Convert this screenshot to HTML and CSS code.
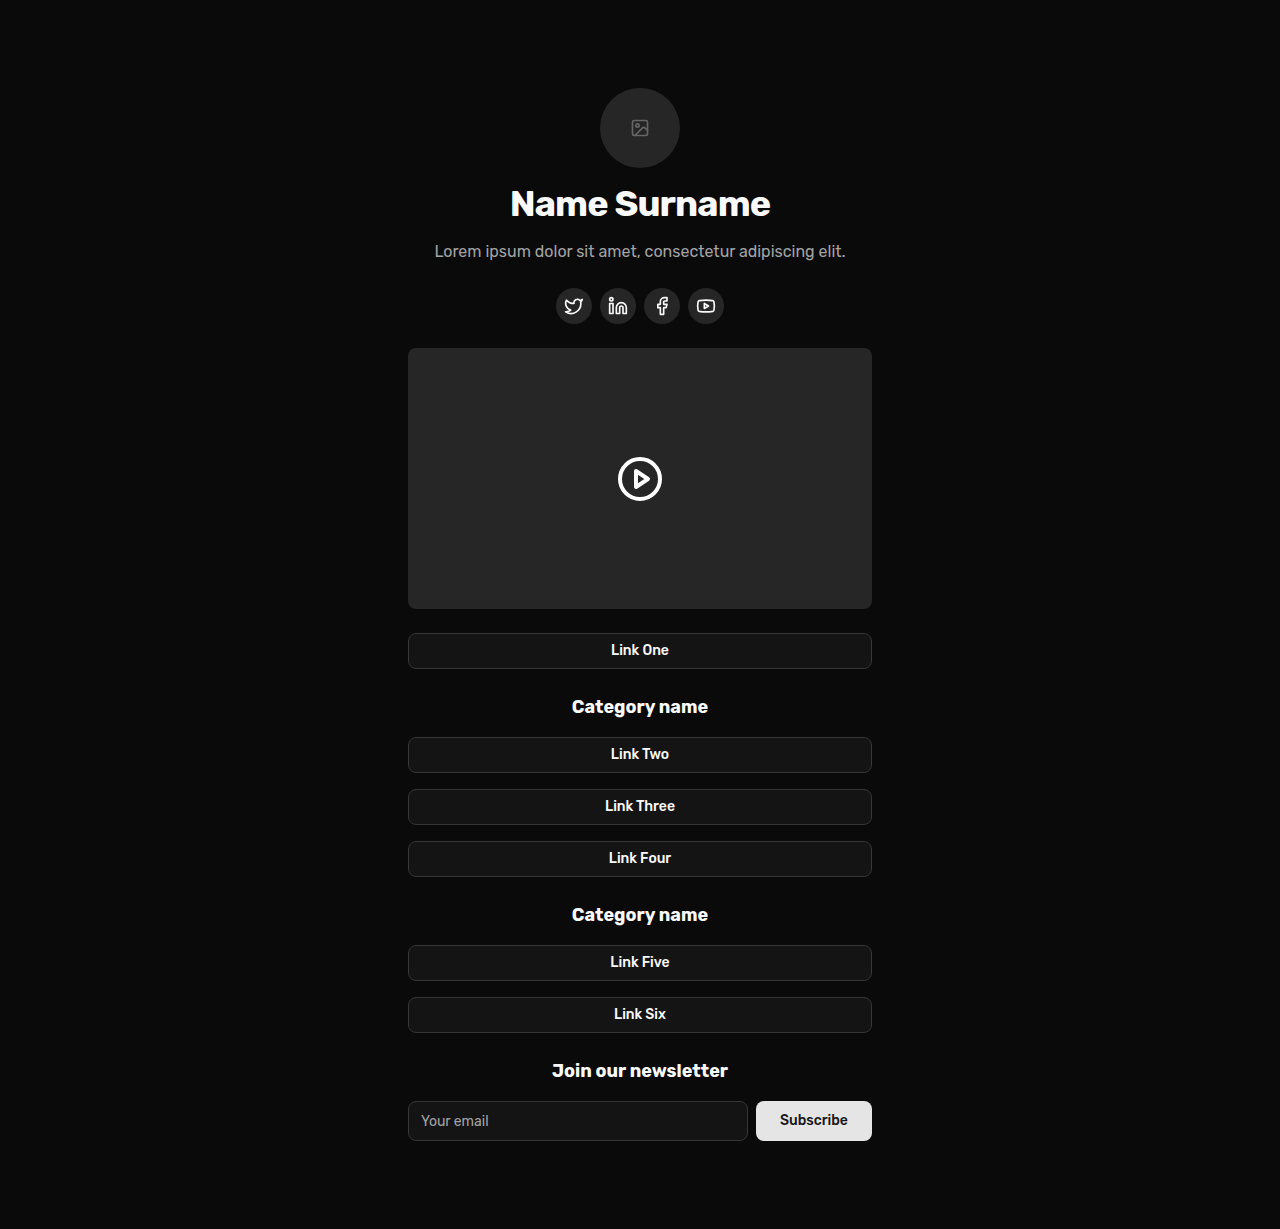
FILE: index.html
```html
<!DOCTYPE html>
<html lang="en">
<head>
<meta charset="utf-8">
<title>Name Surname</title>
<link rel="stylesheet" href="styles.css">
</head>
<body>
<main class="page">
  <header class="profile">
    <div class="avatar">
      <svg class="icon" viewBox="0 0 24 24"><rect x="3" y="3" width="18" height="18" rx="2"/><circle cx="9" cy="9" r="2"/><path d="m21 15-3.086-3.086a2 2 0 0 0-2.828 0L6 21"/></svg>
    </div>
    <h1 class="name">Name Surname</h1>
    <p class="bio">Lorem ipsum dolor sit amet, consectetur adipiscing elit.</p>
  </header>
  <nav class="socials">
    <a class="social" aria-label="Twitter"><svg class="icon" viewBox="0 0 24 24"><path d="M22 4s-.7 2.1-2 3.4c1.6 10-9.4 17.3-18 11.6 2.2.1 4.4-.6 6-2C3 15.5.5 9.6 3 5c2.2 2.6 5.6 4.1 9 4-.9-4.2 4-6.6 7-3.8 1.1 0 3-1.2 3-1.2z"/></svg></a>
    <a class="social" aria-label="LinkedIn"><svg class="icon" viewBox="0 0 24 24"><path d="M16 8a6 6 0 0 1 6 6v7h-4v-7a2 2 0 0 0-4 0v7h-4v-7a6 6 0 0 1 6-6z"/><rect x="2" y="9" width="4" height="12"/><circle cx="4" cy="4" r="2"/></svg></a>
    <a class="social" aria-label="Facebook"><svg class="icon" viewBox="0 0 24 24"><path d="M18 2h-3a5 5 0 0 0-5 5v3H7v4h3v8h4v-8h3l1-4h-4V7a1 1 0 0 1 1-1h3z"/></svg></a>
    <a class="social" aria-label="YouTube"><svg class="icon" viewBox="0 0 24 24"><path d="M2.5 17a24.12 24.12 0 0 1 0-10 2 2 0 0 1 1.4-1.4 49.56 49.56 0 0 1 16.2 0A2 2 0 0 1 21.5 7a24.12 24.12 0 0 1 0 10 2 2 0 0 1-1.4 1.4 49.55 49.55 0 0 1-16.2 0A2 2 0 0 1 2.5 17"/><path d="m10 15 5-3-5-3z"/></svg></a>
  </nav>
  <div class="video">
    <svg class="icon play" viewBox="0 0 24 24"><circle cx="12" cy="12" r="10"/><path d="m10 8 6 4-6 4z"/></svg>
  </div>
  <section class="links">
    <a class="link">Link One</a>
  </section>
  <section class="links">
    <h2 class="heading">Category name</h2>
    <a class="link">Link Two</a>
    <a class="link">Link Three</a>
    <a class="link">Link Four</a>
  </section>
  <section class="links">
    <h2 class="heading">Category name</h2>
    <a class="link">Link Five</a>
    <a class="link">Link Six</a>
  </section>
  <section class="links">
    <h2 class="heading">Join our newsletter</h2>
    <form class="signup">
      <input class="email" type="email" placeholder="Your email">
      <button class="subscribe" type="button">Subscribe</button>
    </form>
  </section>
</main>
</body>
</html>
```
FILE: styles.css
```css
* { box-sizing: border-box; margin: 0; }
body {
  background: #0a0a0a;
  color: #fafafa;
  font-family: Rubik, Roboto, sans-serif;
}
.page {
  width: 464px;
  min-height: 1229px;
  margin: 0 auto;
  padding: 88px 0;
  display: flex;
  flex-direction: column;
  gap: 24px;
}
.icon {
  width: 20px;
  height: 20px;
  fill: none;
  stroke: currentColor;
  stroke-width: 2;
  stroke-linecap: round;
  stroke-linejoin: round;
}
.profile { display: flex; flex-direction: column; align-items: center; }
.avatar {
  width: 80px;
  height: 80px;
  border-radius: 50%;
  background: #262626;
  color: #656565;
  display: grid;
  place-items: center;
}
.name {
  margin-top: 16px;
  font-size: 36px;
  line-height: 40px;
  font-weight: 700;
  letter-spacing: -0.025em;
  white-space: nowrap;
}
.bio {
  margin-top: 16px;
  font-size: 16px;
  line-height: 24px;
  color: #a3a3a3;
  white-space: nowrap;
}
.socials { display: flex; justify-content: center; gap: 8px; }
.social {
  width: 36px;
  height: 36px;
  border-radius: 50%;
  background: #262626;
  display: grid;
  place-items: center;
}
.video {
  height: 261px;
  border-radius: 8px;
  background: #262626;
  display: grid;
  place-items: center;
}
.play { width: 48px; height: 48px; color: #fff; }
.links { display: flex; flex-direction: column; gap: 16px; }
.heading {
  font-size: 18px;
  line-height: 28px;
  font-weight: 700;
  text-align: center;
}
.link {
  height: 36px;
  border: 1px solid #363636;
  border-radius: 8px;
  background: #141414;
  font-size: 14px;
  line-height: 34px;
  font-weight: 500;
  text-align: center;
}
.signup { display: flex; gap: 8px; }
.email {
  flex: 1;
  min-width: 0;
  height: 40px;
  padding: 0 12px;
  border: 1px solid #363636;
  border-radius: 8px;
  background: #141414;
  color: #fafafa;
  font: 400 14px/20px Rubik, Roboto, sans-serif;
}
.email::placeholder { color: #a3a3a3; }
.subscribe {
  width: 116px;
  height: 40px;
  padding: 0;
  border: 0;
  border-radius: 8px;
  background: #e5e5e5;
  color: #171717;
  font: 500 14px/20px Rubik, Roboto, sans-serif;
}
```
